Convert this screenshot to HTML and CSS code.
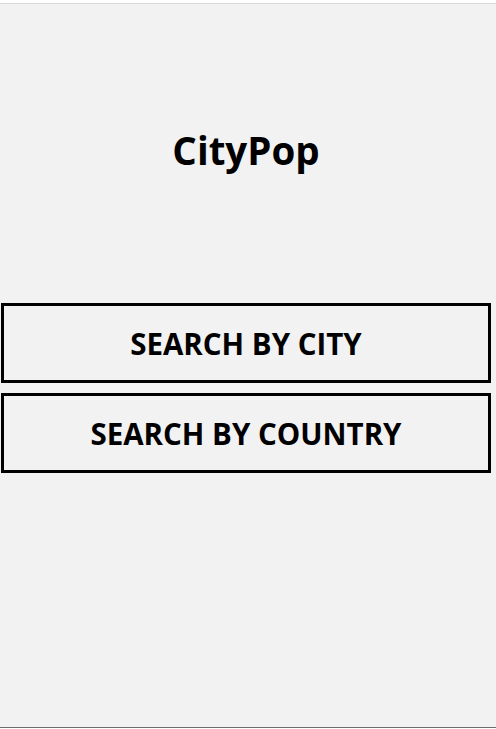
FILE: index.html
```html
<!DOCTYPE html>
<html>
<head>
<meta charset="utf-8">
<link rel="stylesheet" href="styles.css">
</head>
<body>
<div class="frame">
  <h1 class="title">CityPop</h1>
  <div class="buttons">
    <button class="btn">SEARCH BY CITY</button>
    <button class="btn">SEARCH BY COUNTRY</button>
  </div>
</div>
</body>
</html>
```

FILE: styles.css
```css
html, body {
  margin: 0;
  padding: 0;
  background: #ffffff;
}
body {
  padding-top: 3px;
  font-family: "Open Sans", "Noto Sans", sans-serif;
}
.frame {
  box-sizing: border-box;
  height: 725px;
  background: #f2f2f2;
  border-top: 1px solid #d9d9d9;
  border-bottom: 1px solid #6d6d6d;
  padding: 0 5px 0 1px;
  display: flex;
  flex-direction: column;
}
.title {
  margin: 0;
  padding-top: 120px;
  height: 299px;
  flex-shrink: 0;
  box-sizing: border-box;
  text-align: center;
  font-size: 38.5px;
  font-weight: 700;
  line-height: 52px;
  color: #000;
}
.buttons {
  display: flex;
  flex-direction: column;
  gap: 10px;
}
.btn {
  height: 80px;
  width: 100%;
  background: transparent;
  border: 3px solid #000;
  font-family: inherit;
  font-size: 29.5px;
  font-weight: 700;
  color: #000;
  padding: 0;
}
```
